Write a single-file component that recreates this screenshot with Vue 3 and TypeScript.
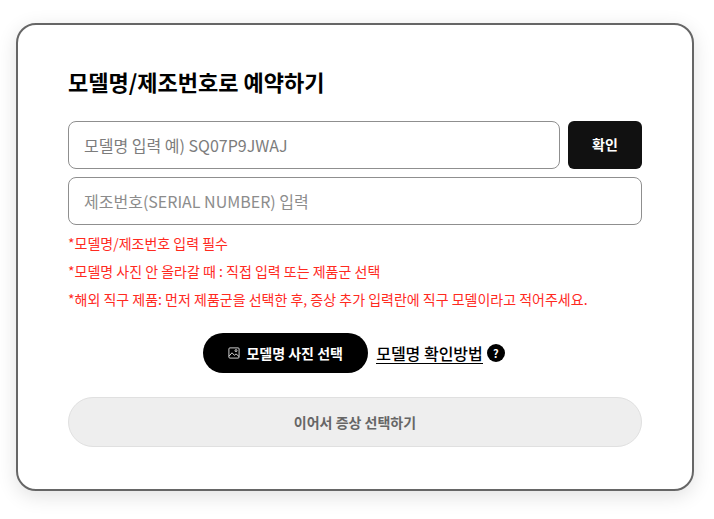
<script setup lang="ts">
const notes: string[] = [
  '*모델명/제조번호 입력 필수',
  '*모델명 사진 안 올라갈 때 : 직접 입력 또는 제품군 선택',
  '*해외 직구 제품: 먼저 제품군을 선택한 후, 증상 추가 입력란에 직구 모델이라고 적어주세요.',
]
</script>

<template>
  <main class="page">
    <section class="card">
      <h1 class="title">모델명/제조번호로 예약하기</h1>
      <div class="row">
        <input class="field" type="text" placeholder="모델명 입력 예) SQ07P9JWAJ" />
        <button class="confirm" type="button">확인</button>
      </div>
      <input class="field serial" type="text" placeholder="제조번호(SERIAL NUMBER) 입력" />
      <ul class="notes">
        <li v-for="note in notes" :key="note">{{ note }}</li>
      </ul>
      <div class="actions">
        <button class="photo" type="button">
          <svg class="photo-icon" viewBox="0 0 12 12" width="12" height="12" fill="none" stroke="#fff" stroke-width="0.8">
            <rect x="0.9" y="0.9" width="10.2" height="10.2" rx="1" />
            <path d="M1 9.2 4 5.8l2.4 2.5 1.6-1.4 3 2.6" />
            <circle cx="8" cy="3.6" r="1" />
          </svg>
          모델명 사진 선택
        </button>
        <a class="howto" href="#">모델명 확인방법</a>
        <span class="help">?</span>
      </div>
      <button class="next" type="button">이어서 증상 선택하기</button>
    </section>
  </main>
</template>

<style>
html, body { margin: 0; background: #fff; }
</style>

<style scoped>
.page {
  width: 714px;
  height: 519px;
  box-sizing: border-box;
  padding: 23px 20px 0 16px;
  overflow: hidden;
  font-family: "Noto Sans CJK KR", "Noto Sans", sans-serif;
}
.card {
  box-sizing: border-box;
  width: 678px;
  height: 468px;
  padding: 40px 50px 0;
  background: #fff;
  border: 2px solid #666;
  border-radius: 20px;
  box-shadow: 0 5px 20px rgba(0, 0, 0, 0.12);
}
.title {
  margin: 0 0 23px;
  height: 33px;
  font-size: 22px;
  line-height: 33px;
  font-weight: 700;
  color: #000;
}
.row {
  display: flex;
  gap: 8px;
  margin-bottom: 8px;
}
.field {
  display: block;
  box-sizing: border-box;
  flex: 1;
  min-width: 0;
  height: 48px;
  padding: 0 15px;
  border: 1px solid #8f8f8f;
  border-radius: 8px;
  background: #fff;
  font: 400 16px "Noto Sans CJK KR", sans-serif;
  color: #333;
  outline: none;
}
.field::placeholder { color: #7c7c7c; opacity: 1; }
.serial { width: 100%; }
.serial::placeholder { color: #8c8c8c; }
.confirm {
  width: 74px;
  height: 48px;
  padding: 0 0 3px;
  border: 0;
  border-radius: 6px;
  background: #111;
  color: #fff;
  font: 700 14px "Noto Sans CJK KR", sans-serif;
}
.notes {
  list-style: none;
  margin: 4px 0 0;
  padding: 0;
  color: #ff2a1f;
  font-size: 14px;
  line-height: 28px;
}
.actions {
  display: flex;
  align-items: center;
  justify-content: center;
  margin-top: 20px;
  height: 40px;
  padding-right: 2px;
}
.photo {
  display: flex;
  align-items: center;
  justify-content: center;
  gap: 6px;
  width: 165px;
  height: 40px;
  padding: 0;
  border: 0;
  border-radius: 20px;
  background: #000;
  color: #fff;
  font: 700 14px "Noto Sans CJK KR", sans-serif;
}
.photo-icon { flex: none; }
.howto {
  margin-left: 8px;
  color: #000;
  font-size: 16px;
  font-weight: 500;
  text-decoration: none;
  border-bottom: 1px solid #000;
  line-height: 20px;
}
.help {
  display: flex;
  align-items: center;
  justify-content: center;
  width: 18px;
  height: 18px;
  margin-left: 4px;
  border-radius: 50%;
  background: #000;
  color: #fff;
  font: 700 11px "Noto Sans CJK KR", sans-serif;
}
.next {
  display: block;
  width: 100%;
  height: 50px;
  margin-top: 24px;
  border: 1px solid #e0e0e0;
  border-radius: 25px;
  background: #eee;
  color: #666;
  font: 700 14px "Noto Sans CJK KR", sans-serif;
}
</style>
